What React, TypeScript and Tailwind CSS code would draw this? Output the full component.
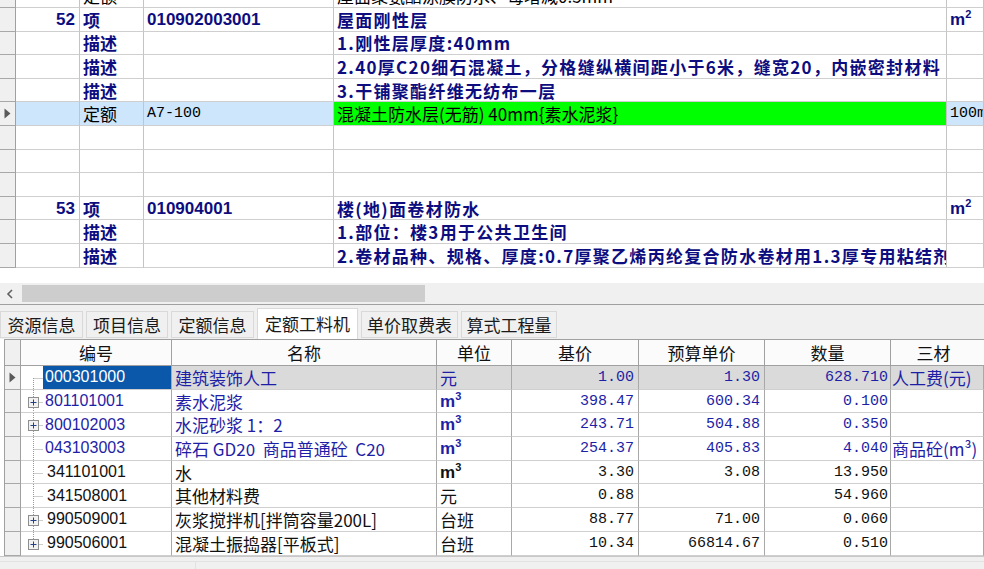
import React from "react";

type TopRowData = {
  num?: string;
  type?: string;
  code?: string;
  name?: string;
  unit?: string;
  kind: "plain" | "item" | "sel" | "empty";
};

const topRows: TopRowData[] = [
  { kind: "plain", type: "定额", code: "A7-51", name: "屋面聚氨酯涂膜防水、每增减0.5mm", unit: "100m²" },
  { kind: "item", num: "52", type: "项", code: "010902003001", name: "屋面刚性层", unit: "m2" },
  { kind: "item", type: "描述", name: "1.刚性层厚度:40mm" },
  { kind: "item", type: "描述", name: "2.40厚C20细石混凝土，分格缝纵横间距小于6米，缝宽20，内嵌密封材料" },
  { kind: "item", type: "描述", name: "3.干铺聚酯纤维无纺布一层" },
  { kind: "sel", type: "定额", code: "A7-100", name: "混凝土防水层(无筋) 40mm{素水泥浆}", unit: "100m²" },
  { kind: "empty" },
  { kind: "empty" },
  { kind: "empty" },
  { kind: "item", num: "53", type: "项", code: "010904001", name: "楼(地)面卷材防水", unit: "m2" },
  { kind: "item", type: "描述", name: "1.部位：楼3用于公共卫生间" },
  { kind: "item", type: "描述", name: "2.卷材品种、规格、厚度:0.7厚聚乙烯丙纶复合防水卷材用1.3厚专用粘结剂" },
];

type MatRow = {
  code: string;
  name: string;
  unit: string;
  base: string;
  budget: string;
  qty: string;
  sancai?: string;
  blue?: boolean;
  plus?: boolean;
  sel?: boolean;
};

const matRows: MatRow[] = [
  { code: "000301000", name: "建筑装饰人工", unit: "元", base: "1.00", budget: "1.30", qty: "628.710", sancai: "人工费(元)", blue: true, sel: true },
  { code: "801101001", name: "素水泥浆", unit: "m3", base: "398.47", budget: "600.34", qty: "0.100", blue: true, plus: true },
  { code: "800102003", name: "水泥砂浆 1：2", unit: "m3", base: "243.71", budget: "504.88", qty: "0.350", blue: true, plus: true },
  { code: "043103003", name: "碎石 GD20  商品普通砼  C20", unit: "m3", base: "254.37", budget: "405.83", qty: "4.040", sancai: "商品砼(m³)", blue: true },
  { code: "341101001", name: "水", unit: "m3", base: "3.30", budget: "3.08", qty: "13.950" },
  { code: "341508001", name: "其他材料费", unit: "元", base: "0.88", budget: "", qty: "54.960" },
  { code: "990509001", name: "灰浆搅拌机[拌筒容量200L]", unit: "台班", base: "88.77", budget: "71.00", qty: "0.060", plus: true },
  { code: "990506001", name: "混凝土振捣器[平板式]", unit: "台班", base: "10.34", budget: "66814.67", qty: "0.510", plus: true },
];

const tabs = [
  { label: "资源信息", w: "w-[83px]" },
  { label: "项目信息", w: "w-[82px]" },
  { label: "定额信息", w: "w-[83px]" },
  { label: "定额工料机", w: "w-[101px]", active: true },
  { label: "单价取费表", w: "w-[97px]" },
  { label: "算式工程量", w: "w-[96px]" },
];

const cjk = "font-['Noto_Sans_CJK_SC','Noto_Sans',sans-serif]";
const mono = "font-['Liberation_Mono','Noto_Sans_CJK_SC',monospace]";
const latin = "font-['Liberation_Sans','Noto_Sans_CJK_SC',sans-serif]";

function Pointer() {
  return (
    <svg width="7" height="11" viewBox="0 0 7 11">
      <path d="M0.5 0.5 L6.5 5.5 L0.5 10.5 Z" fill="#5a5a5a" />
    </svg>
  );
}

// m² / m³ drawn as a bold m with a small raised digit, like the grid font does
function Power({ p }: { p: string }) {
  return (
    <span className={`${latin} font-bold text-[17px] leading-none inline-flex items-start`}>
      m<span className="text-[11px] leading-none -mt-[2px]">{p}</span>
    </span>
  );
}

function TopRow({ r }: { r: TopRowData }) {
  const sel = r.kind === "sel";
  const bold = r.kind === "item";
  const txt = bold ? "font-bold text-[#0d0d80]" : "text-black";
  const bg = sel ? "bg-[#cde6fb]" : "bg-white";
  const cell = "h-full shrink-0 flex items-center border-r border-b border-r-[#c4c4c4] border-b-[#cfcfcf] overflow-hidden whitespace-nowrap";
  return (
    <div className="flex h-[23.6px] text-[17px] leading-none">
      <div className="w-[16px] h-full shrink-0 flex items-center justify-center bg-[#f0f0f0] border-r border-b border-r-[#a0a0a0] border-b-[#a8a8a8]">
        {sel && <Pointer />}
      </div>
      <div className={`${cell} w-[64px] justify-end pr-[4px] ${bg} ${txt} ${latin}`}>{r.num}</div>
      <div className={`${cell} w-[64px] pl-[3px] ${bg} ${txt} ${cjk}`}>{r.type}</div>
      <div className={`${cell} w-[190px] pl-[3px] ${bg} ${txt} ${bold ? `${latin} text-[17px]` : `${mono} text-[15px]`}`}>
        {r.code}
      </div>
      <div className={`${cell} w-[613px] pl-[3px] ${sel ? "bg-[#00ff00]" : "bg-white"} ${txt} ${cjk} ${bold ? "tracking-[1.3px]" : ""}`}>
        {r.name}
      </div>
      <div className={`${cell} flex-1 pl-[3px] ${bg} ${txt} ${mono} text-[15px]`}>
        {r.unit === "m2" ? <Power p="2" /> : r.unit}
      </div>
    </div>
  );
}

function Tree({ first, last, plus }: { first: boolean; last: boolean; plus?: boolean }) {
  const y1 = first ? 12 : 0;
  const y2 = last ? 12 : 24;
  return (
    <svg width="22" height="24" viewBox="0 0 22 24" className="block">
      <line x1="12.5" y1={y1} x2="12.5" y2={y2} stroke="#9a9a9a" strokeDasharray="1 1" />
      <line x1="12.5" y1="12.5" x2="22" y2="12.5" stroke="#9a9a9a" strokeDasharray="1 1" />
      {plus && (
        <g>
          <rect x="7.5" y="7.5" width="10" height="10" fill="#f2f2f2" stroke="#8e8e8e" />
          <line x1="9.5" y1="12.5" x2="15.5" y2="12.5" stroke="#23408a" />
          <line x1="12.5" y1="9.5" x2="12.5" y2="15.5" stroke="#23408a" />
        </g>
      )}
    </svg>
  );
}

function MatLine({ r, i }: { r: MatRow; i: number }) {
  const color = r.blue ? "text-[#1e1ea6]" : "text-[#111111]";
  const bg = r.sel ? "bg-[#dadada]" : "bg-white";
  const cell = "h-full shrink-0 flex items-center border-r border-b border-r-[#a8a8a8] border-b-[#cfcfcf] overflow-hidden whitespace-pre";
  return (
    <div className="flex h-[23.7px] leading-none">
      <div className="w-[16px] h-full shrink-0 flex items-center justify-center bg-[#f0f0f0] border-r border-b border-r-[#a0a0a0] border-b-[#a8a8a8]">
        {r.sel && <Pointer />}
      </div>
      <div className="w-[22px] h-full shrink-0 bg-white border-b border-b-[#cfcfcf] overflow-hidden">
        <Tree first={i === 0} last={i === matRows.length - 1} plus={r.plus} />
      </div>
      <div
        className={`${cell} w-[129px] pl-[2px] text-[16px] ${latin} ${
          r.sel ? "bg-[#0b57aa] text-white" : `bg-white ${color}`
        } ${r.blue ? "" : "pl-[4px]"}`}
      >
        {r.code}
      </div>
      <div className={`${cell} w-[265px] pl-[3px] text-[17px] ${cjk} ${bg} ${color}`}>{r.name}</div>
      <div className={`${cell} w-[75px] pl-[3px] text-[17px] ${cjk} ${bg} ${color}`}>
        {r.unit === "m3" ? <Power p="3" /> : r.unit}
      </div>
      <div className={`${cell} w-[127px] justify-end pr-[4px] text-[15px] ${mono} ${bg} ${color}`}>{r.base}</div>
      <div className={`${cell} w-[126px] justify-end pr-[4px] text-[15px] ${mono} ${bg} ${color}`}>{r.budget}</div>
      <div className={`${cell} w-[126px] justify-end pr-[2px] text-[15px] ${mono} ${bg} ${color}`}>{r.qty}</div>
      <div className={`${cell} flex-1 pl-[1px] text-[17px] ${cjk} ${bg} ${color}`}>{r.sancai}</div>
    </div>
  );
}

export default function App() {
  return (
    <div className={`w-[984px] h-[569px] overflow-hidden bg-white ${cjk}`}>
      {/* upper bill grid */}
      <div className="h-[270px] overflow-hidden">
        <div className="mt-[-15.6px]">
          {topRows.map((r, i) => (
            <TopRow key={i} r={r} />
          ))}
        </div>
      </div>
      <div className="h-[13px] bg-white" />

      {/* horizontal scrollbar */}
      <div className="h-[21px] bg-[#f0f0f0] flex items-center">
        <div className="w-[20px] flex items-center justify-center">
          <svg width="8" height="10" viewBox="0 0 8 10">
            <path d="M6 1 L2 5 L6 9" fill="none" stroke="#606060" strokeWidth="1.6" />
          </svg>
        </div>
        <div className="ml-[2px] w-[403px] h-[17px] bg-[#cdcdcd]" />
      </div>
      <div className="h-px bg-[#a0a0a0]" />

      {/* tabs */}
      <div className="h-[34px] bg-[#f0f0f0] flex items-end gap-[3px]">
        {tabs.map((t) =>
          t.active ? (
            <div
              key={t.label}
              className={`${t.w} h-[31px] bg-white border border-b-0 border-[#d9d9d9] flex items-center justify-center text-[17px] text-[#1a1a1a]`}
            >
              {t.label}
            </div>
          ) : (
            <div
              key={t.label}
              className={`${t.w} h-[27px] mb-px bg-[#f0f0f0] border border-[#d9d9d9] flex items-center justify-center text-[17px] text-[#1a1a1a]`}
            >
              {t.label}
            </div>
          )
        )}
      </div>

      {/* resource grid */}
      <div className="ml-[4px] border-l border-t border-[#a0a0a0]">
        <div className="flex h-[26px] text-[17px] leading-none text-[#111111]">
          <div className="w-[16px] shrink-0 bg-[#f0f0f0] border-r border-b border-[#a0a0a0]" />
          <div className="w-[151px] shrink-0 bg-[#fbfbfb] border-r border-b border-[#a0a0a0] flex items-center justify-center">编号</div>
          <div className="w-[265px] shrink-0 bg-[#fbfbfb] border-r border-b border-[#a0a0a0] flex items-center justify-center">名称</div>
          <div className="w-[75px] shrink-0 bg-[#fbfbfb] border-r border-b border-[#a0a0a0] flex items-center justify-center">单位</div>
          <div className="w-[127px] shrink-0 bg-[#fbfbfb] border-r border-b border-[#a0a0a0] flex items-center justify-center">基价</div>
          <div className="w-[126px] shrink-0 bg-[#fbfbfb] border-r border-b border-[#a0a0a0] flex items-center justify-center">预算单价</div>
          <div className="w-[126px] shrink-0 bg-[#fbfbfb] border-r border-b border-[#a0a0a0] flex items-center justify-center">数量</div>
          <div className="flex-1 bg-[#fbfbfb] border-b border-[#a0a0a0] flex items-center justify-center pr-[8px]">三材</div>
        </div>
        {matRows.map((r, i) => (
          <MatLine key={r.code} r={r} i={i} />
        ))}
      </div>

      {/* footer strip */}
      <div className="h-[14px] bg-[#f0f0f0] border-t border-[#c8c8c8] flex">
        <div className="w-[196px] mt-[4px] border-t border-r border-[#e2e2e2]" />
        <div className="flex-1 mt-[4px] border-t border-[#e2e2e2]" />
      </div>
    </div>
  );
}
